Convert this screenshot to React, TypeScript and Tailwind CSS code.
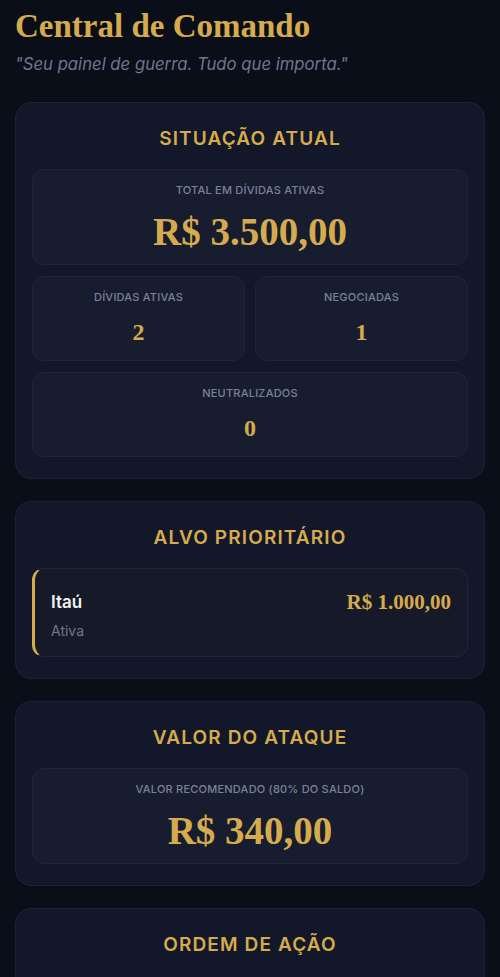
const serif = "font-['Liberation_Serif',serif]";

function SectionTitle({ children }: { children: React.ReactNode }) {
  return (
    <h2 className="text-center text-[19px] font-semibold uppercase leading-7 tracking-[0.06em] text-[#d6ab4d]">
      {children}
    </h2>
  );
}

function StatBox({ label, value, big }: { label: string; value: string; big?: boolean }) {
  return (
    <div
      className={
        big
          ? "rounded-xl border border-[#1f2638] bg-[#171d2f] px-4 pt-3 pb-2 text-center"
          : "rounded-xl border border-[#1f2638] bg-[#171d2f] px-4 pt-3 pb-3 text-center"
      }
    >
      <div className="text-[11px] font-medium uppercase leading-4 tracking-[0.02em] text-[#7a8299]">{label}</div>
      <div
        className={
          big
            ? `${serif} mt-[10px] text-[39px] font-bold leading-[48px] text-[#d6ab4d]`
            : `${serif} mt-[11px] text-[24px] font-bold leading-8 text-[#d6ab4d]`
        }
      >
        {value}
      </div>
    </div>
  );
}

function Card({ title, children }: { title: string; children?: React.ReactNode }) {
  return (
    <section className="rounded-2xl border border-[#1c2336] bg-[#121829] px-4 pt-[22px] pb-[21px]">
      <SectionTitle>{title}</SectionTitle>
      <div className="mt-4 flex flex-col gap-[11px]">{children}</div>
    </section>
  );
}

export default function App() {
  return (
    <div className="min-h-screen bg-[#0a0e19] px-[15px] pt-[6px] pb-10 font-['Inter',sans-serif]">
      <h1 className={`${serif} text-[33px] font-bold leading-10 text-[#d6ab4d]`}>Central de Comando</h1>
      <p className="mt-[6px] text-[16.7px] italic leading-6 text-[#6f7791]">
        "Seu painel de guerra. Tudo que importa."
      </p>

      <div className="mt-[26px] flex flex-col gap-[22px]">
        <Card title="Situação Atual">
          <StatBox label="Total em dívidas ativas" value="R$ 3.500,00" big />
          <div className="grid grid-cols-2 gap-[10px]">
            <StatBox label="Dívidas ativas" value="2" />
            <StatBox label="Negociadas" value="1" />
          </div>
          <StatBox label="Neutralizados" value="0" />
        </Card>

        <Card title="Alvo Prioritário">
          <div className="rounded-xl border border-[#1f2638] border-l-[3px] border-l-[#d6ab4d] bg-[#161a28] px-4 pt-[21px] pb-[15px]">
            <div className="flex items-center justify-between">
              <span className="text-[17px] font-semibold leading-6 text-[#f1f2f5]">Itaú</span>
              <span className={`${serif} text-[21px] font-bold leading-6 text-[#d6ab4d]`}>R$ 1.000,00</span>
            </div>
            <div className="mt-[7px] text-[14px] leading-5 text-[#6f7791]">Ativa</div>
          </div>
        </Card>

        <Card title="Valor do Ataque">
          <StatBox label="Valor recomendado (80% do saldo)" value="R$ 340,00" big />
        </Card>

        <Card title="Ordem de Ação">
          <div className="h-20" />
        </Card>
      </div>
    </div>
  );
}
